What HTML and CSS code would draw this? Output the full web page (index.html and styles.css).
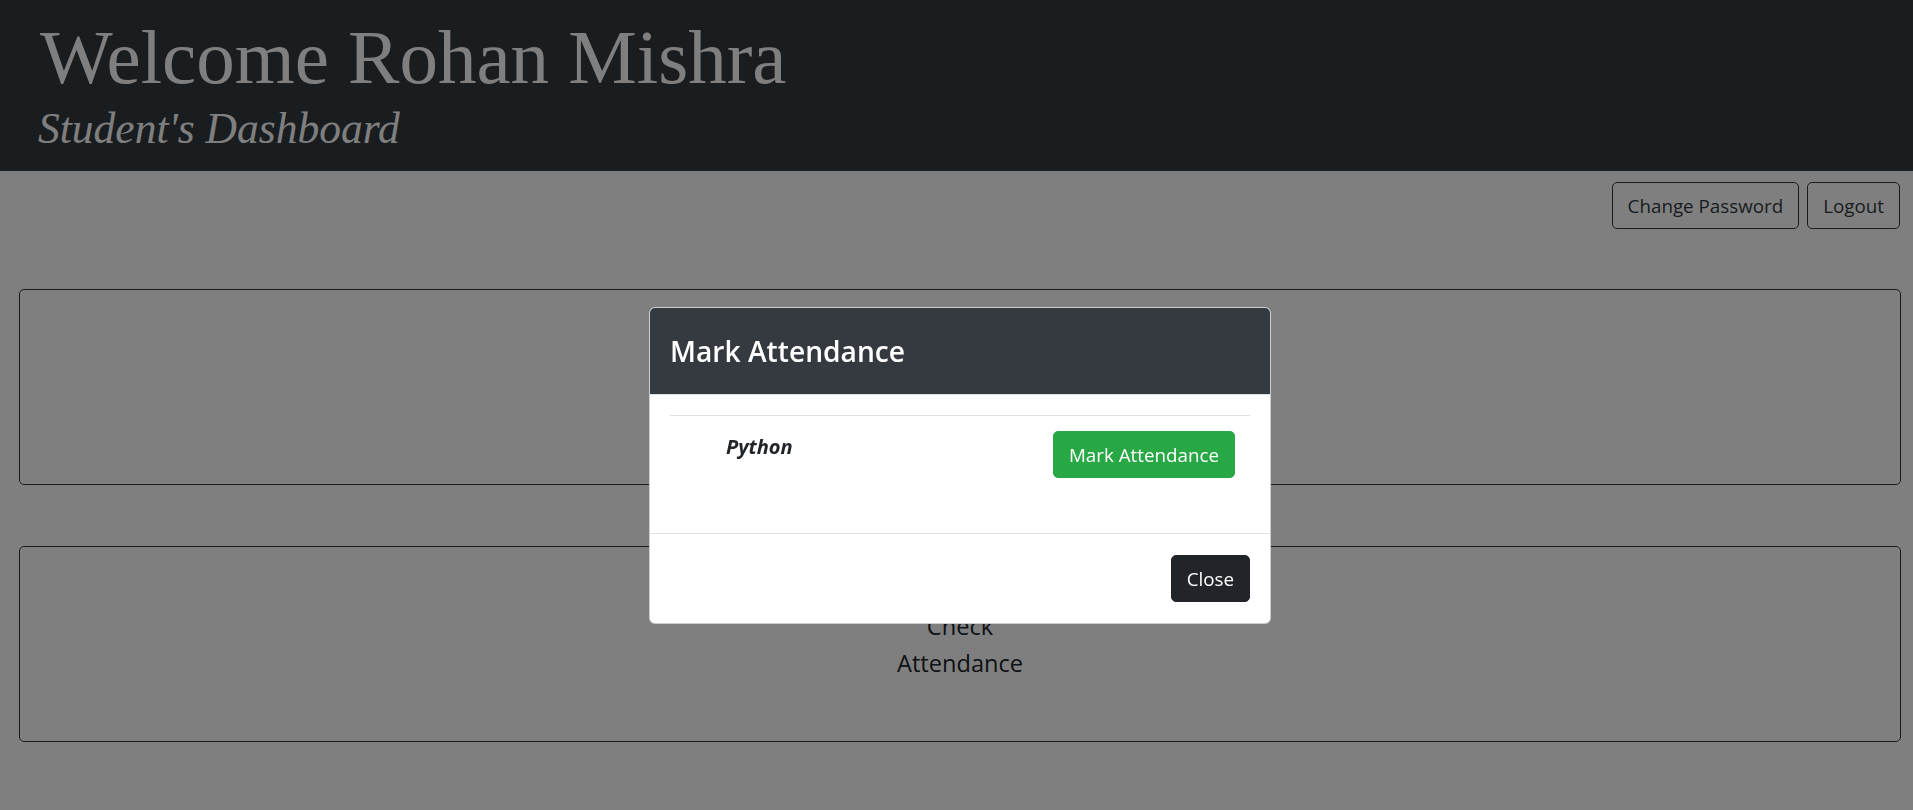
FILE: index.html
```html
<!DOCTYPE html>
<html lang="en">
<head>
<meta charset="utf-8">
<title>Student's Dashboard</title>
<link rel="stylesheet" href="styles.css">
</head>
<body>
<header class="site-header">
  <h1 class="welcome">Welcome Rohan Mishra</h1>
  <p class="subtitle">Student's Dashboard</p>
</header>

<div class="toolbar">
  <button class="btn btn-outline">Change Password</button>
  <button class="btn btn-outline">Logout</button>
</div>

<main class="cards">
  <section class="card">
    <div class="card-text">Mark Attendance</div>
  </section>
  <section class="card">
    <div class="card-text">Check Attendance</div>
  </section>
</main>

<div class="backdrop"></div>

<div class="modal">
  <div class="modal-content">
    <div class="modal-header">
      <h4 class="modal-title">Mark Attendance</h4>
    </div>
    <div class="modal-body">
      <table class="subject-table">
        <tbody>
          <tr>
            <td class="subject-name">Python</td>
            <td class="subject-action"><button class="btn btn-success">Mark Attendance</button></td>
          </tr>
        </tbody>
      </table>
    </div>
    <div class="modal-footer">
      <button class="btn btn-dark">Close</button>
    </div>
  </div>
</div>
</body>
</html>
```

FILE: styles.css
```css
* {
  box-sizing: border-box;
}

html, body {
  margin: 0;
  padding: 0;
}

body {
  background: #ffffff;
  color: #212529;
  font-family: "Open Sans", "Noto Sans", "Liberation Sans", sans-serif;
  font-size: 20px;
  line-height: 1.5;
  height: 810px;
  overflow: hidden;
}

.site-header {
  background: #343a40;
  height: 171px;
  padding: 12px 0 0 40px;
}

.welcome {
  margin: 0;
  font-family: "Liberation Serif", "Times New Roman", serif;
  font-weight: 400;
  font-size: 77px;
  line-height: 91px;
  color: #ffffff;
}

.subtitle {
  margin: 1px 0 0 -2px;
  font-family: "Liberation Serif", "Times New Roman", serif;
  font-style: italic;
  font-size: 43.5px;
  line-height: 49px;
  color: #ffffff;
}

.toolbar {
  display: flex;
  justify-content: flex-end;
  gap: 8px;
  margin-top: 11px;
  padding-right: 13px;
}

.btn {
  font-family: "Open Sans", "Noto Sans", "Liberation Sans", sans-serif;
  font-size: 18.8px;
  line-height: 30px;
  padding: 7.5px 15px;
  border: 1px solid transparent;
  border-radius: 5px;
  background: transparent;
  cursor: pointer;
}

.btn-outline {
  border-color: #343a40;
  color: #343a40;
}

.btn-success {
  background: #28a745;
  border-color: #28a745;
  color: #ffffff;
}

.btn-dark {
  background: #212529;
  border-color: #212529;
  color: #ffffff;
}

.cards {
  display: flex;
  flex-direction: column;
  gap: 61px;
  margin: 60px 12px 0 19px;
}

.card {
  height: 196px;
  border: 1px solid #343a40;
  border-radius: 5px;
  display: flex;
  align-items: center;
  justify-content: center;
}

.card-text {
  width: min-content;
  text-align: center;
  font-size: 23.6px;
  line-height: 37px;
  padding-top: 2px;
  color: #212529;
}

.backdrop {
  position: fixed;
  inset: 0;
  background: rgba(0, 0, 0, 0.5);
}

.modal {
  position: fixed;
  top: 307px;
  left: 649px;
  width: 622px;
}

.modal-content {
  background: #ffffff;
  border: 1px solid rgba(0, 0, 0, 0.2);
  border-radius: 6px;
  overflow: hidden;
}

.modal-header {
  background: #343a40;
  padding: 21px 20px 20px;
  border-bottom: 1px solid #dee2e6;
}

.modal-title {
  margin: 0;
  font-size: 28.2px;
  font-weight: 600;
  line-height: 45px;
  color: #ffffff;
}

.modal-body {
  padding: 20px;
}

.subject-table {
  width: 100%;
  border-collapse: collapse;
  margin-bottom: 20px;
}

.subject-table td {
  border-top: 1px solid #dee2e6;
  padding: 15px;
  vertical-align: top;
}

.subject-name {
  padding-left: 56px !important;
  padding-top: 16px !important;
  font-weight: 700;
  font-style: italic;
}

.subject-action {
  text-align: right;
}

.modal-footer {
  display: flex;
  justify-content: flex-end;
  padding: 16px 15px 16px;
  border-top: 1px solid #dee2e6;
}

.modal-footer .btn {
  margin: 5px;
}
```
